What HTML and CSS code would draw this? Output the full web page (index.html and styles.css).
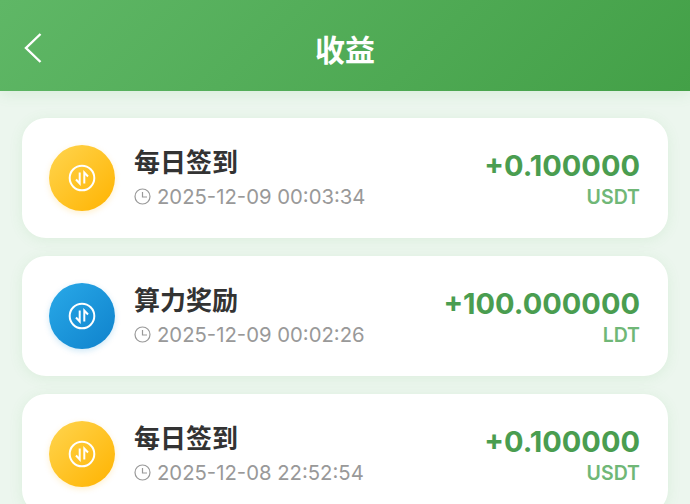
FILE: index.html
```html
<!DOCTYPE html>
<html lang="zh-CN">
<head>
  <meta charset="UTF-8">
  <meta name="viewport" content="width=device-width, initial-scale=1.0">
  <title>收益</title>
  <link rel="stylesheet" href="styles.css">
</head>
<body>
  <div class="page">
    <div class="nav">
      <a href="javascript:;" class="back">
        <svg width="20" height="32" viewBox="0 0 20 32"><path d="M17.5 2 L3 16 L17.5 30" fill="none" stroke="#fff" stroke-width="2.4"/></svg>
      </a>
      <div class="nav-title">收益</div>
    </div>
    <div class="list">
      <div class="card">
        <div class="coin coin-yellow">
          <svg width="34" height="34" viewBox="0 0 34 34"><circle cx="17" cy="17" r="12.3" fill="none" stroke="#fff" stroke-width="2"/><path d="M14.7 11.5 V22.5 L11 18.5 M19.3 22.5 V11.5 L23 15.5" fill="none" stroke="#fff" stroke-width="2"/></svg>
        </div>
        <div class="info">
          <div class="name">每日签到</div>
          <div class="time">
            <svg class="clock" width="17" height="17" viewBox="0 0 17 17"><circle cx="8.5" cy="8.5" r="7.5" fill="none" stroke="#999" stroke-width="1.2"/><path d="M8.5 4 V9 H13" fill="none" stroke="#999" stroke-width="1.2"/></svg>
            2025-12-09 00:03:34
          </div>
        </div>
        <div class="money">
          <div class="amount">+0.100000</div>
          <div class="unit">USDT</div>
        </div>
      </div>
      <div class="card">
        <div class="coin coin-blue">
          <svg width="34" height="34" viewBox="0 0 34 34"><circle cx="17" cy="17" r="12.3" fill="none" stroke="#fff" stroke-width="2"/><path d="M14.7 11.5 V22.5 L11 18.5 M19.3 22.5 V11.5 L23 15.5" fill="none" stroke="#fff" stroke-width="2"/></svg>
        </div>
        <div class="info">
          <div class="name">算力奖励</div>
          <div class="time">
            <svg class="clock" width="17" height="17" viewBox="0 0 17 17"><circle cx="8.5" cy="8.5" r="7.5" fill="none" stroke="#999" stroke-width="1.2"/><path d="M8.5 4 V9 H13" fill="none" stroke="#999" stroke-width="1.2"/></svg>
            2025-12-09 00:02:26
          </div>
        </div>
        <div class="money">
          <div class="amount">+100.000000</div>
          <div class="unit">LDT</div>
        </div>
      </div>
      <div class="card">
        <div class="coin coin-yellow">
          <svg width="34" height="34" viewBox="0 0 34 34"><circle cx="17" cy="17" r="12.3" fill="none" stroke="#fff" stroke-width="2"/><path d="M14.7 11.5 V22.5 L11 18.5 M19.3 22.5 V11.5 L23 15.5" fill="none" stroke="#fff" stroke-width="2"/></svg>
        </div>
        <div class="info">
          <div class="name">每日签到</div>
          <div class="time">
            <svg class="clock" width="17" height="17" viewBox="0 0 17 17"><circle cx="8.5" cy="8.5" r="7.5" fill="none" stroke="#999" stroke-width="1.2"/><path d="M8.5 4 V9 H13" fill="none" stroke="#999" stroke-width="1.2"/></svg>
            2025-12-08 22:52:54
          </div>
        </div>
        <div class="money">
          <div class="amount">+0.100000</div>
          <div class="unit">USDT</div>
        </div>
      </div>
    </div>
  </div>
</body>
</html>
```
FILE: styles.css
```css
html, body {
  margin: 0;
  height: 100%;
  overflow: hidden;
}
body {
  font-family: Inter, "Noto Sans CJK SC", sans-serif;
}
.page {
  height: 504px;
  overflow: hidden;
  background: #ecf6ee;
}
.nav {
  height: 91px;
  display: flex;
  align-items: center;
  justify-content: center;
  position: relative;
  background: linear-gradient(135deg, #5fb766 0%, #43a047 100%);
  box-shadow: 0 3px 14px rgba(76, 175, 80, 0.12);
}
.back {
  position: absolute;
  left: 23px;
  top: 32px;
  line-height: 0;
}
.nav-title {
  color: #fff;
  font-size: 30px;
  font-weight: 700;
  line-height: 40px;
  padding-top: 8px;
}
.list {
  padding: 27px 22px 0;
  display: flex;
  flex-direction: column;
  gap: 18px;
}
.card {
  height: 120px;
  flex: none;
  box-sizing: border-box;
  padding: 0 28px 0 27px;
  display: flex;
  align-items: center;
  background: #fff;
  border-radius: 24px;
  box-shadow: 0 2px 14px rgba(76, 175, 80, 0.1);
}
.coin {
  width: 66px;
  height: 66px;
  flex: none;
  border-radius: 50%;
  display: flex;
  align-items: center;
  justify-content: center;
  margin-right: 19px;
}
.coin-yellow {
  background: linear-gradient(135deg, #ffd54f 0%, #ffb300 100%);
  box-shadow: 0 2px 6px rgba(255, 179, 0, 0.2);
}
.coin-blue {
  background: linear-gradient(135deg, #29a9e8 0%, #0f82cc 100%);
  box-shadow: 0 2px 6px rgba(2, 136, 209, 0.2);
}
.info {
  flex: 1;
}
.name {
  color: #333;
  font-size: 26px;
  font-weight: 700;
  line-height: 36px;
}
.time {
  color: #999;
  font-size: 20.3px;
  line-height: 30px;
  margin-top: 1px;
  display: flex;
  align-items: center;
  gap: 6px;
}
.clock {
  flex: none;
}
.money {
  text-align: right;
}
.amount {
  color: #4a9d50;
  font-size: 29px;
  font-weight: 700;
  line-height: 38px;
  padding-top: 1px;
}
.unit {
  color: #70b777;
  font-size: 19.5px;
  font-weight: 600;
  line-height: 25px;
}
```
